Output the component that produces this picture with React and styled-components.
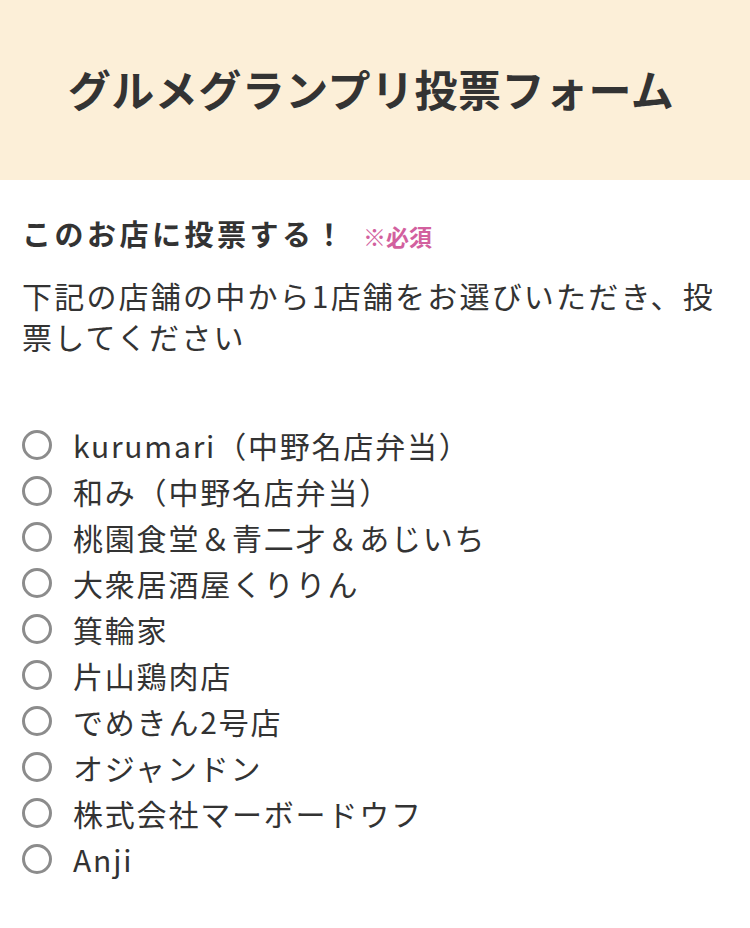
import React from "react";
import styled, { createGlobalStyle } from "styled-components";

const GlobalStyle = createGlobalStyle`
  body {
    margin: 0;
    background: #fff;
    font-family: "Noto Sans CJK JP", "Noto Sans", sans-serif;
    color: #333;
  }
`;

// ヘッダー
const Header = styled.header`
  height: 180px;
  background-color: #fcefd8;
  display: flex;
  align-items: center;
  justify-content: center;
`;

const Title = styled.h1`
  margin: 0 8px 4px 0;
  font-size: 43px;
  font-weight: 700;
  letter-spacing: 0.5px;
  color: #333;
`;

const Body = styled.main`
  padding: 0 22px 40px;
`;

const QuestionRow = styled.div`
  display: flex;
  align-items: baseline;
  margin-top: 32px;
  height: 44px;
`;

const Question = styled.span`
  font-size: 29px;
  font-weight: 700;
  letter-spacing: 3.5px;
`;

const Required = styled.span`
  margin-left: 16px;
  font-size: 23px;
  font-weight: 700;
  color: #d2609e;
`;

const Description = styled.p`
  margin: 19px 0 0;
  font-size: 30px;
  line-height: 41px;
  letter-spacing: 2.2px;
  color: #333;
`;

const Options = styled.ul`
  list-style: none;
  margin: 65px 0 0;
  padding: 0;
`;

const Option = styled.li`
  display: flex;
  align-items: center;
  height: 46px;
`;

const Radio = styled.span`
  width: 30px;
  height: 30px;
  box-sizing: border-box;
  border: 3px solid #8c8c8c;
  border-radius: 50%;
  flex-shrink: 0;
  margin-right: 21px;
`;

const Label = styled.span`
  font-size: 30px;
  letter-spacing: 1.8px;
  color: #333;
`;

const shops = [
  "kurumari（中野名店弁当）",
  "和み（中野名店弁当）",
  "桃園食堂＆青二才＆あじいち",
  "大衆居酒屋くりりん",
  "箕輪家",
  "片山鶏肉店",
  "でめきん2号店",
  "オジャンドン",
  "株式会社マーボードウフ",
  "Anji",
];

const App = () => {
  return (
    <div>
      <GlobalStyle />
      <Header>
        <Title>グルメグランプリ投票フォーム</Title>
      </Header>
      <Body>
        <QuestionRow>
          <Question>このお店に投票する！</Question>
          <Required>※必須</Required>
        </QuestionRow>
        <Description>
          下記の店舗の中から1店舗をお選びいただき、投票してください
        </Description>
        <Options>
          {shops.map((name) => (
            <Option key={name}>
              <Radio />
              <Label>{name}</Label>
            </Option>
          ))}
        </Options>
      </Body>
    </div>
  );
};

export default App;
